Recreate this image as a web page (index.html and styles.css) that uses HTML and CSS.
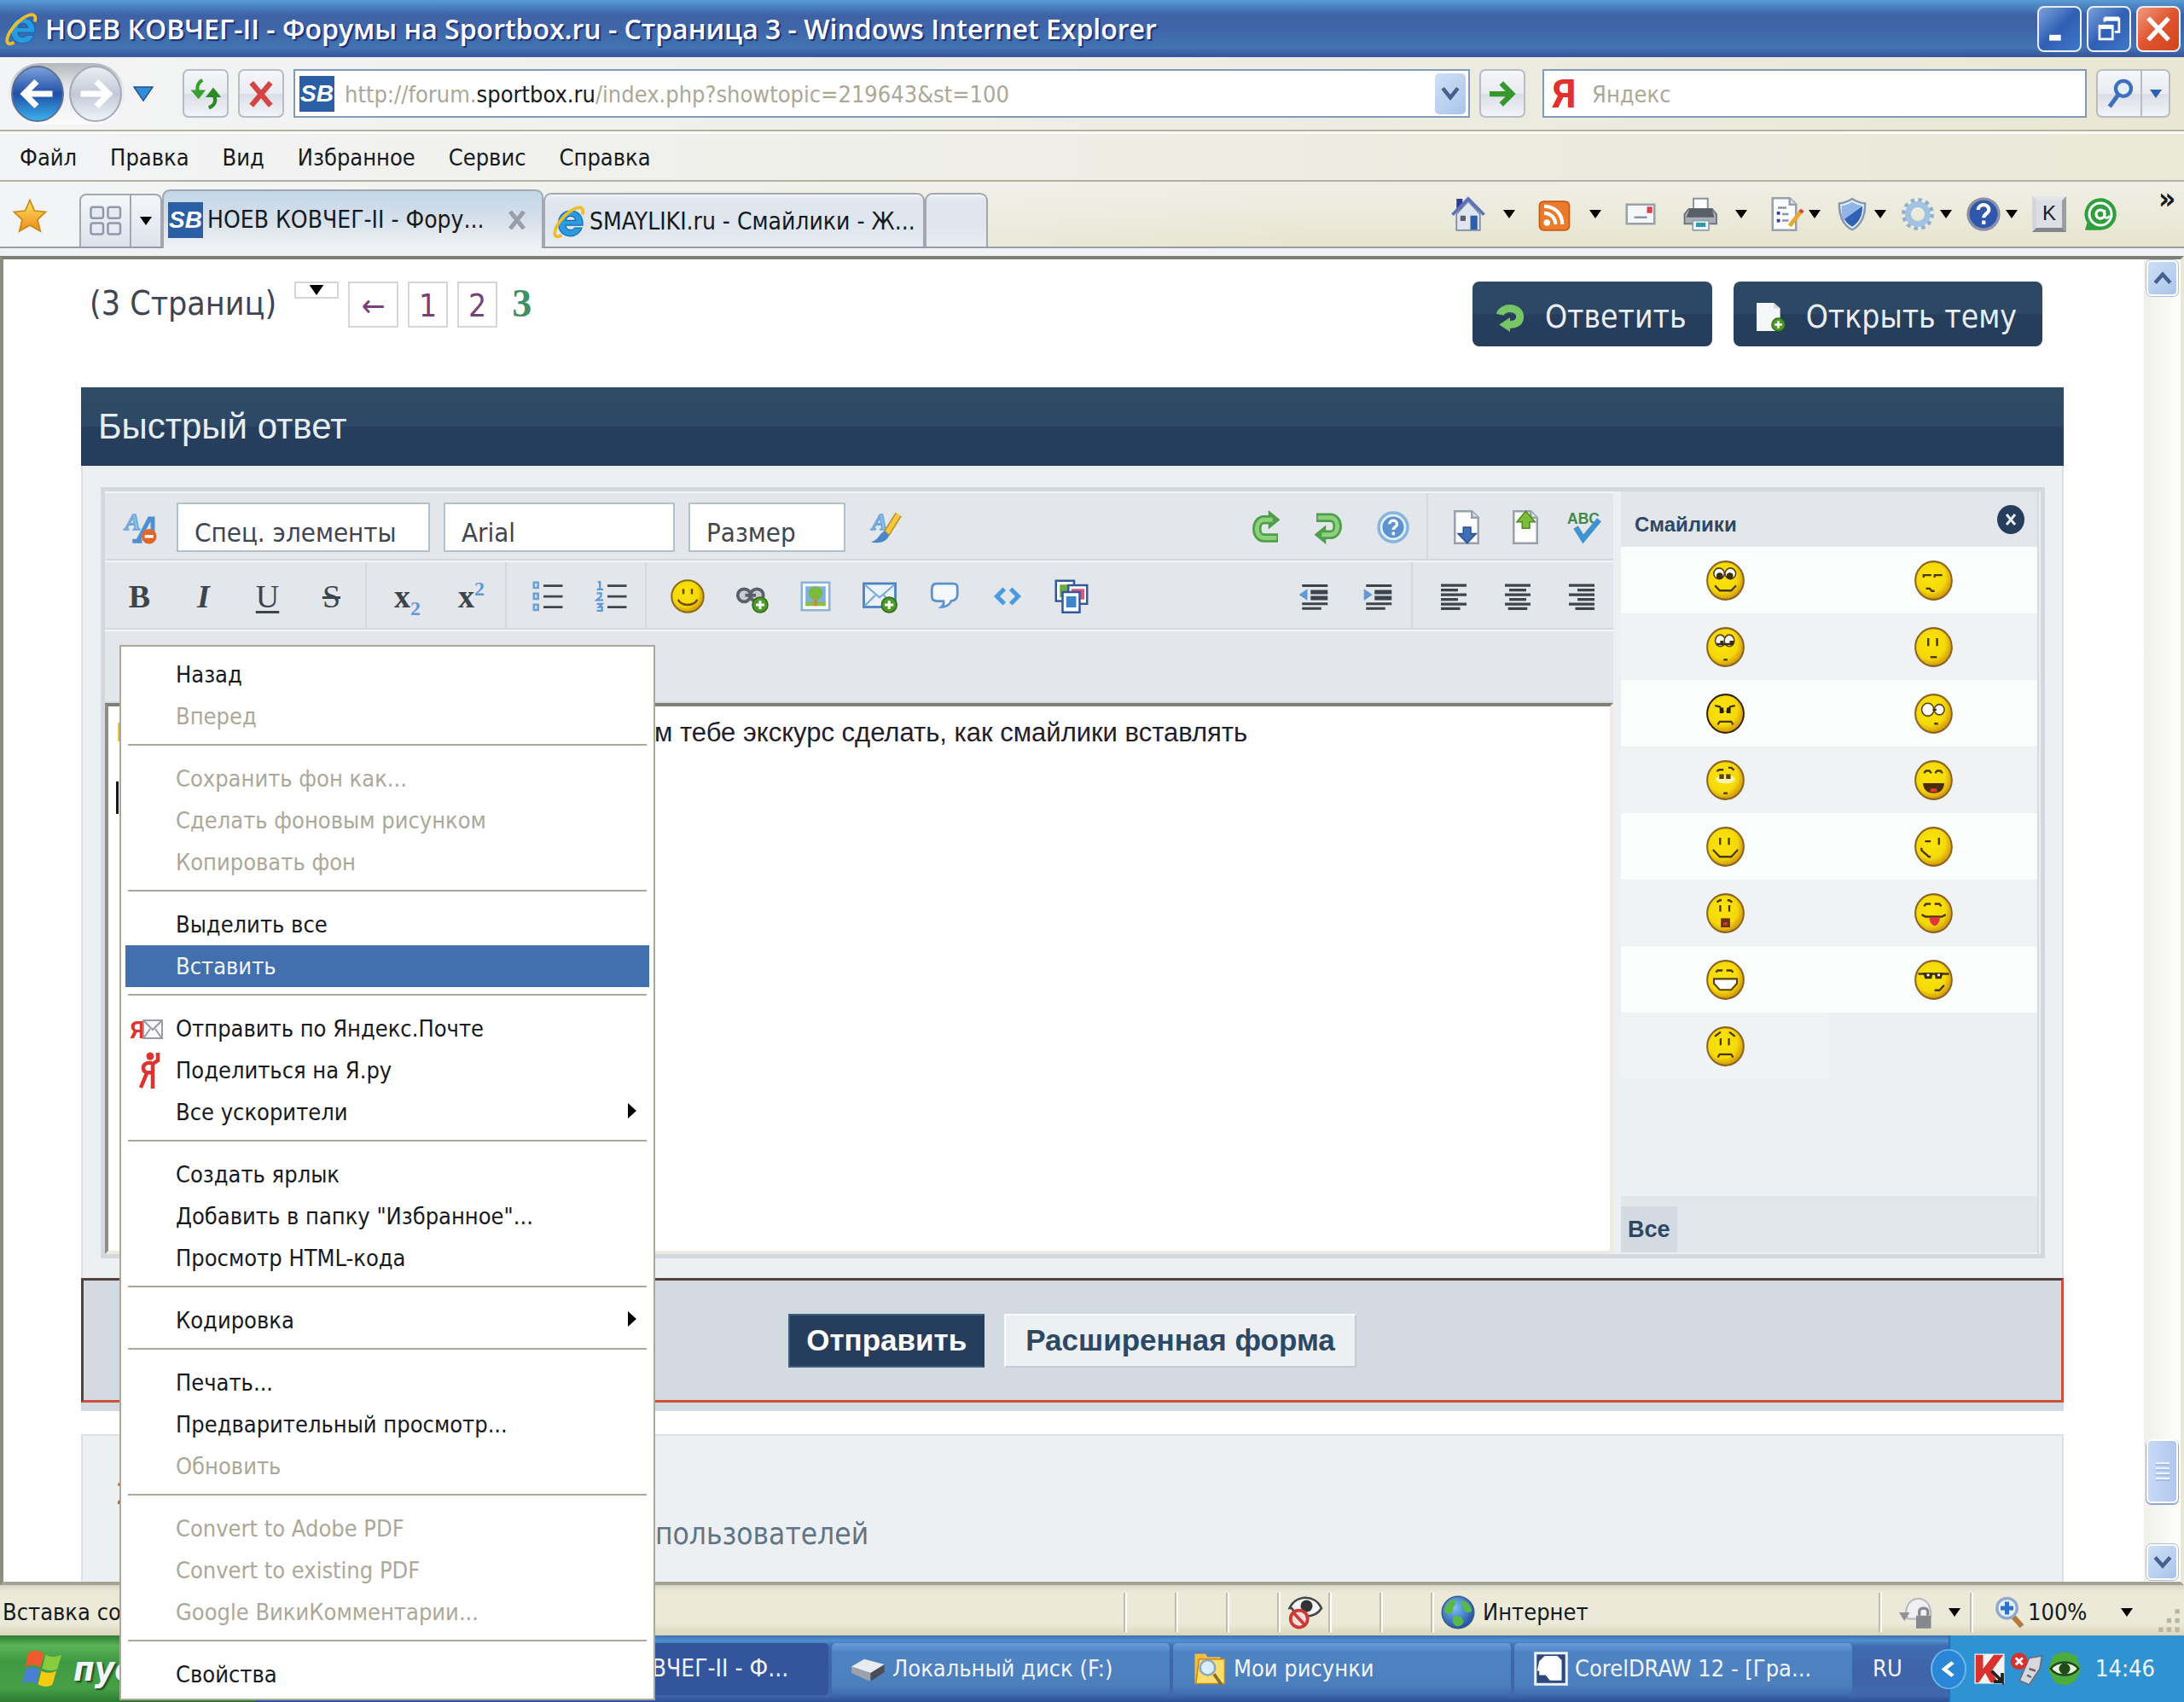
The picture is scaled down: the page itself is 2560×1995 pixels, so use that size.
FILE: index.html
```html
<!DOCTYPE html>
<html lang="ru">
<head>
    <meta charset="UTF-8">
    <meta name="viewport" content="width=device-width, initial-scale=1.0">
    <title>НОЕВ КОВЧЕГ-II - Форумы на Sportbox.ru - Страница 3</title>
    <link rel="stylesheet" href="styles.css">
</head>
<body>
    <!-- Общие значки -->
    <svg class="defs" aria-hidden="true">
        <defs>
            <linearGradient id="g-blue" x1="0" y1="0" x2="0" y2="1"><stop offset="0" stop-color="#7fa3dc"/><stop offset=".5" stop-color="#1f4fa5"/><stop offset="1" stop-color="#3cb4f0"/></linearGradient>
            <linearGradient id="g-grey" x1="0" y1="0" x2="0" y2="1"><stop offset="0" stop-color="#eceff4"/><stop offset=".5" stop-color="#c3cad6"/><stop offset="1" stop-color="#eef4fa"/></linearGradient>
            <linearGradient id="g-gold" x1="0" y1="0" x2="0" y2="1"><stop offset="0" stop-color="#ffe45c"/><stop offset="1" stop-color="#f08a1c"/></linearGradient>
            <radialGradient id="g-face" cx=".42" cy=".4" r=".62"><stop offset="0" stop-color="#fbe40a"/><stop offset=".65" stop-color="#f5d90a"/><stop offset="1" stop-color="#cf930e"/></radialGradient>
            <radialGradient id="g-globe" cx=".4" cy=".35" r=".7"><stop offset="0" stop-color="#7cc0f5"/><stop offset="1" stop-color="#1c4c9e"/></radialGradient>
        </defs>
        <symbol id="ie" viewBox="0 0 16 16">
            <path d="M14 9.600H6c.1 1.300 1 2.200 2.300 2.200.9 0 1.600-.4 2-1h3.300c-.7 2.300-2.700 3.900-5.300 3.900-3.500 0-5.700-2.400-5.700-5.900 0-3.500 2.400-6 5.900-6s5.800 2.700 5.500 6.800zM6.100 7.300h4.500C10.500 6.100 9.700 5.300 8.400 5.300S6.300 6.100 6.100 7.300z" fill="#2b9be0" stroke="#1668b4" stroke-width=".5"/>
            <path d="M13.900 4.600C14.700 2 13.700.7 11.200 1.500 7 2.800 1.800 8.500 1 12.500c-.5 2.500 1 3 3.200 1.800" fill="none" stroke="#f0bd2a" stroke-width="1.500"/>
        </symbol>
        <symbol id="plus" viewBox="0 0 8 8"><circle cx="4" cy="4" r="3.600" fill="#4c9a2a" stroke="#2f6b16" stroke-width=".6"/><path d="M4 2v4M2 4h4" stroke="#fff" stroke-width="1.200"/></symbol>
        <symbol id="down" viewBox="0 0 14 10"><path d="M0 0h14L7 10z"/></symbol>
        <symbol id="page" viewBox="0 0 16 16"><path d="M2.500.5h8l3 3v12h-11z" fill="#fcfcfd" stroke="#98a0ac"/><path d="M10.500.5v3h3" fill="#dfe3ea" stroke="#98a0ac"/></symbol>
    </svg>

    <header class="titlebar">
        <svg class="icon"><use href="#ie"/></svg>
        <h1>НОЕВ КОВЧЕГ-II - Форумы на Sportbox.ru - Страница 3 - Windows Internet Explorer</h1>
        <div class="window-buttons">
            <button type="button" aria-label="Свернуть"><svg viewBox="0 0 20 20"><path d="M3 16h8" stroke="#fff" stroke-width="4"/></svg></button>
            <button type="button" aria-label="Свернуть в окно"><svg viewBox="0 0 20 20"><path d="M7 5V3h10v9h-3" fill="none" stroke="#fff" stroke-width="1.600"/><path d="M7 3h10" stroke="#fff" stroke-width="3"/><path d="M3.500 8h9v9h-9z" fill="none" stroke="#fff" stroke-width="1.600"/><path d="M3 8.500h10" stroke="#fff" stroke-width="3"/></svg></button>
            <button type="button" class="close" aria-label="Закрыть"><svg viewBox="0 0 20 20"><path d="M3 2.500l14 15M17 2.500l-14 15" stroke="#fff" stroke-width="3.200"/></svg></button>
        </div>
    </header>

    <div class="addressbar">
        <div class="history">
            <button type="button" aria-label="Назад"><svg viewBox="0 0 60 64"><ellipse cx="30" cy="32" rx="29" ry="31" fill="url(#g-blue)" stroke="#5c6f96" stroke-width="2"/><path d="M47 32H16M29 18L15 32l14 14" fill="none" stroke="#fff" stroke-width="7"/></svg></button>
            <button type="button" aria-label="Вперед"><svg viewBox="0 0 60 64"><ellipse cx="30" cy="32" rx="29" ry="31" fill="url(#g-grey)" stroke="#a3abb8" stroke-width="2"/><path d="M13 32h31M31 18l14 14-14 14" fill="none" stroke="#fff" stroke-width="7"/></svg></button>
        </div>
        <button type="button" class="history-list" aria-label="Последние страницы"><svg viewBox="0 0 24 18"><path d="M1 1h22L12 17z" fill="#2f8ed8" stroke="#24508c" stroke-width="1.500"/></svg></button>
        <button type="button" class="tool" aria-label="Обновить"><svg class="icon" viewBox="0 0 16 16"><path d="M6.500 1.500C4 3 3.800 5.500 4.500 7.500" fill="none" stroke="#38a02c" stroke-width="1.700"/><path d="M1 6.200h7l-3.300 4.300z" fill="#38a02c"/><path d="M9.500 14.500c3-1 3.500-3.500 2.500-5.500" fill="none" stroke="#2b8a24" stroke-width="1.700"/><path d="M8 9.600h7.300l-3.700-4.600z" fill="#2b8a24"/></svg></button>
        <button type="button" class="tool" aria-label="Остановить"><svg class="icon" viewBox="0 0 16 16"><path d="M3.500 2.800l9 10.700M12.500 2.800l-9 10.700" stroke="#d34545" stroke-width="2.500"/></svg></button>
        <div class="field address">
            <span class="favicon">SB</span>
            <div class="url" role="textbox" contenteditable="true" aria-label="Адрес">http://forum.<b>sportbox.ru</b>/index.php?showtopic=219643&amp;st=100</div>
            <button type="button" class="address-drop" aria-label="Список адресов"><svg viewBox="0 0 20 16"><path d="M2 2l8 10 8-10" fill="none" stroke="#46608c" stroke-width="4"/></svg></button>
        </div>
        <button type="button" class="tool go" aria-label="Переход"><svg class="icon" viewBox="0 0 16 16"><path d="M2 8h10M7.500 3l5 5-5 5" fill="none" stroke="#36982c" stroke-width="2.500"/></svg></button>
        <div class="field search">
            <span class="yandex">Я</span>
            <input type="text" placeholder="Яндекс" aria-label="Яндекс">
        </div>
        <div class="search-buttons">
            <button type="button" class="tool" aria-label="Поиск"><svg class="icon" viewBox="0 0 16 16"><circle cx="10" cy="5.500" r="3.600" fill="#e6effa" stroke="#3c6fc0" stroke-width="1.700"/><path d="M7.500 8.500L3.500 14" stroke="#3c6fc0" stroke-width="2"/></svg></button>
            <button type="button" class="tool" aria-label="Выбор поиска"><svg class="arrow arrow-blue"><use href="#down"/></svg></button>
        </div>
    </div>

    <nav class="menubar">
        <button type="button">Файл</button>
        <button type="button">Правка</button>
        <button type="button">Вид</button>
        <button type="button">Избранное</button>
        <button type="button">Сервис</button>
        <button type="button">Справка</button>
    </nav>

    <div class="tabbar">
        <button type="button" class="star" aria-label="Избранное"><svg class="icon" viewBox="0 0 16 16"><path d="M8 .7l2.200 4.900 5.200.6-3.800 3.600 1.300 5.400L8 12.400l-4.900 2.800 1.300-5.400L.6 6.200l5.200-.6z" fill="url(#g-gold)" stroke="#c98a1a" stroke-width=".7"/></svg></button>
        <div class="quick-tabs">
            <button type="button" aria-label="Быстрые вкладки"><svg class="icon" viewBox="0 0 16 16"><g fill="#e6eaf2" stroke="#8f98ac"><rect x="1" y="1.500" width="5.800" height="5.200" rx="1"/><rect x="9" y="1.500" width="5.800" height="5.200" rx="1"/><rect x="1" y="9" width="5.800" height="5.200" rx="1"/><rect x="9" y="9" width="5.800" height="5.200" rx="1"/></g></svg></button>
            <button type="button" aria-label="Список вкладок"><svg class="arrow"><use href="#down"/></svg></button>
        </div>
        <div class="tab active">
            <span class="favicon">SB</span>
            <span>НОЕВ КОВЧЕГ-II - Фору...</span>
            <button type="button" class="tab-close" aria-label="Закрыть вкладку"><svg viewBox="0 0 20 22"><path d="M2 1l16 20M18 1L2 21" stroke="#9a9ea6" stroke-width="5"/></svg></button>
        </div>
        <div class="tab">
            <svg class="icon"><use href="#ie"/></svg>
            <span>SMAYLIKI.ru - Смайлики - Ж...</span>
        </div>
        <button type="button" class="tab new-tab" aria-label="Новая вкладка"></button>

        <div class="commands">
            <button type="button" class="cmd wide" aria-label="Домой">
                <svg class="icon" viewBox="0 0 16 16"><path d="M2.500 8v7.500h11V8L8 2z" fill="#e0e6ef" stroke="#7f8aa0" stroke-width=".7"/><path d="M2.500.8h2.800v4L2.500 7z" fill="#2c3a9c"/><path d="M.6 8.300L8 .8l7.400 7.500" fill="none" stroke="#5f70bf" stroke-width="1.500"/><path d="M4.300 8.700h2.500v2.500H4.300z" fill="#5a6070"/><path d="M9 8.700h3.300v6.500H9z" fill="#2f5fa8"/></svg>
                <svg class="arrow"><use href="#down"/></svg>
            </button>
            <button type="button" class="cmd wide" aria-label="Веб-каналы">
                <svg class="icon" viewBox="0 0 16 16"><rect x="1" y="2" width="14" height="13.500" rx="2" fill="#ec7a2b" stroke="#c95a14" stroke-width=".7"/><circle cx="4.500" cy="12" r="1.500" fill="#fff"/><path d="M3.200 7.500c3 0 5.300 2.200 5.300 5.300M3.200 4.300c5 0 8.500 3.500 8.500 8.500" fill="none" stroke="#fff" stroke-width="1.700"/></svg>
                <svg class="arrow"><use href="#down"/></svg>
            </button>
            <button type="button" class="cmd mail" aria-label="Почта">
                <svg class="icon" viewBox="0 0 16 16"><rect x="1.500" y="3.500" width="13" height="9" fill="#f6f7f9" stroke="#9aa0ac"/><rect x="11" y="4.500" width="2.500" height="3" fill="#d9434e"/><path d="M5 9.500h6" stroke="#8f94a0"/></svg>
            </button>
            <button type="button" class="cmd wide" aria-label="Печать">
                <svg class="icon" viewBox="0 0 16 16"><path d="M4.800.7h6.700V7H4.800z" fill="#fff" stroke="#8d929c" stroke-width=".8"/><path d="M.6 8l2-2.500h11l2 2.500v4.500H.6z" fill="#a9adb4" stroke="#6a6e78" stroke-width=".7"/><path d="M3 5.500h10.500L14.500 9.500h-13z" fill="#5a5e68"/><path d="M4.500 11h7.500v4.500H4.500z" fill="#f2f6fa" stroke="#8fa0b0" stroke-width=".7"/><path d="M6 12h4.500v2H6z" fill="#2f9aa8"/></svg>
                <svg class="arrow"><use href="#down"/></svg>
            </button>
            <button type="button" class="cmd" aria-label="Страница">
                <svg class="icon" viewBox="0 0 16 16"><use href="#page" x="-1"/><path d="M4 5h4M6 8h3M6 11h3" stroke="#8b93a6"/><path d="M3.500 7.500h1.500M3.500 11h1.500" stroke="#2b3f9c" stroke-width="1.500"/><path d="M15 6.500L9.500 13.500" stroke="#e9a92f" stroke-width="2"/><path d="M15.500 6l-1 1.200" stroke="#d04b42" stroke-width="2"/></svg>
                <svg class="arrow"><use href="#down"/></svg>
            </button>
            <button type="button" class="cmd" aria-label="Безопасность">
                <svg class="icon" viewBox="0 0 16 16"><path d="M8 .8c2 1.400 4 2 6 2.200.3 5-1.500 10-6 12.300C3.500 13 1.700 8 2 3c2-.2 4-.8 6-2.200z" fill="#eef3fa" stroke="#8796b2"/><path d="M8 2.200c1.500 1 3 1.500 4.700 1.800L4 11C3 8.800 2.800 6.400 3.200 4 5 3.700 6.500 3.200 8 2.200z" fill="#8fb6e6"/><path d="M12.800 4.200c.2 4-1.400 7.800-4.800 9.700-1.500-.8-2.800-2-3.600-3.500z" fill="#2f62b4"/></svg>
                <svg class="arrow"><use href="#down"/></svg>
            </button>
            <button type="button" class="cmd" aria-label="Сервис">
                <svg class="icon" viewBox="0 0 16 16"><circle cx="8" cy="8" r="6.500" fill="none" stroke="#8fb0d0" stroke-width="2.200" stroke-dasharray="1.700 1.700"/><circle cx="8" cy="8" r="4.600" fill="none" stroke="#a1c2e0" stroke-width="2.800"/></svg>
                <svg class="arrow"><use href="#down"/></svg>
            </button>
            <button type="button" class="cmd" aria-label="Справка">
                <svg class="icon" viewBox="0 0 16 16"><circle cx="8" cy="8" r="7.200" fill="#2f56ad" stroke="#8a90a4" stroke-width="1.300"/><path d="M5.500 6C5.600 2.800 10.600 3 10.500 6c0 1.700-2.400 1.800-2.400 3.700M8.100 11v1.800" fill="none" stroke="#fff" stroke-width="1.700"/></svg>
                <svg class="arrow"><use href="#down"/></svg>
            </button>
            <button type="button" class="cmd plain" aria-label="Клавиатура"><span class="key">K</span></button>
            <button type="button" class="cmd plain" aria-label="Агент">
                <svg class="icon" viewBox="0 0 16 16"><path d="M8 .5a7.500 7.500 0 110 15H.8l1-3.500A7.500 7.500 0 018 .5z" fill="#2f9e3c"/><circle cx="8" cy="8" r="5.200" fill="none" stroke="#fff" stroke-width="1.200"/><circle cx="8" cy="8" r="2" fill="none" stroke="#fff" stroke-width="1.300"/><path d="M10 6v3c.3 1.300 1.800 1 2-.3" fill="none" stroke="#fff"/></svg>
            </button>
            <span class="more">»</span>
        </div>
    </div>

    <div class="viewport">
        <main class="page">
            <div class="topic-nav">
                <div class="pages">
                    <span class="pages-label">(3 Страниц)</span>
                    <button type="button" class="pages-jump" aria-label="Перейти к странице"><svg viewBox="0 0 14 10"><use href="#down"/></svg></button>
                    <a href="#" class="page-link prev">←</a>
                    <a href="#" class="page-link">1</a>
                    <a href="#" class="page-link">2</a>
                    <span class="page-current">3</span>
                </div>
                <div class="topic-buttons">
                    <a href="#" class="topic-button"><svg viewBox="0 0 16 16"><path d="M2.500 6.500C3.500 2 13 1.500 13.500 7.500c0 3-2 4.500-5.500 4.500" fill="none" stroke="#76c566" stroke-width="4.200"/><path d="M8 8v8l-6-4z" fill="#76c566"/></svg>Ответить</a>
                    <a href="#" class="topic-button"><svg viewBox="0 0 16 16"><path d="M0 0h9.500L13 3v12.500H0z" fill="#f4f6f8"/><path d="M9.500 0v3H13z" fill="#cfd6de"/><use href="#plus" x="8" y="8" width="8" height="8"/></svg>Открыть тему</a>
                </div>
            </div>

            <section class="reply">
                <h2>Быстрый ответ</h2>
                <div class="reply-body">
                    <div class="editor">
                        <div class="editor-main">
                            <div class="toolbar">
                                <button type="button" class="tb" aria-label="Убрать форматирование"><svg class="icon" viewBox="0 0 16 16"><path d="M4.500 14.500h4.500M7 14.500L12.500 4h1.500v7" fill="none" stroke="#4f8fd0" stroke-width="2"/><text x="1" y="9" class="ico-a">A</text><circle cx="12.300" cy="12.300" r="3.500" fill="#e0672a"/><path d="M10.300 12.300h4" stroke="#fff" stroke-width="1.400"/></svg></button>
                                <select class="sel-special" aria-label="Спец. элементы"><option>Спец. элементы</option></select>
                                <select class="sel-font" aria-label="Шрифт"><option>Arial</option></select>
                                <select class="sel-size" aria-label="Размер"><option>Размер</option></select>
                                <button type="button" class="tb" aria-label="Цвет шрифта"><svg class="icon" viewBox="0 0 16 16"><text x="2" y="9" class="ico-a">A</text><path d="M14.500 2L8.500 11.500" stroke="#b98a1a" stroke-width="3.400"/><path d="M14.500 2L8.500 11.500" stroke="#f4c83c" stroke-width="2.200"/><path d="M8.500 10c-3 0-2.500 3.500-7 5 3.500.8 8 0 8.500-3.500z" fill="#4a86c8"/></svg></button>
                                <div class="tb-group right">
                                    <button type="button" class="tb" aria-label="Вперед"><svg class="icon" viewBox="0 0 16 16"><path d="M11 4.500H7.500C3 4.500 3 13 7.500 13H14" fill="none" stroke="#4e9f4c" stroke-width="4.200"/><path d="M9.500 0l5.500 4.500L9.500 9z" fill="#4e9f4c"/><path d="M11.500 4.500h-4C3 4.500 3 13 7.500 13H13.300" fill="none" stroke="#8fd07c" stroke-width="2"/></svg></button>
                                    <button type="button" class="tb" aria-label="Назад"><svg class="icon" viewBox="0 0 16 16"><path d="M2 3.500h6.500c4.500 0 4.500 8 0 8H5" fill="none" stroke="#4e9f4c" stroke-width="4.200"/><path d="M6.500 7L1 11.500 6.500 16z" fill="#4e9f4c"/><path d="M2.700 3.500h5.800c4.500 0 4.500 8 0 8H4.500" fill="none" stroke="#8fd07c" stroke-width="2"/></svg></button>
                                    <button type="button" class="tb" aria-label="Помощь"><svg class="icon" viewBox="0 0 16 16"><circle cx="8" cy="8" r="6.800" fill="#e2eefa" stroke="#88b4e0" stroke-width="1.400"/><circle cx="8" cy="8" r="5" fill="#5d93cf"/><path d="M6.300 6.500c0-2.200 3.500-2.200 3.500 0 0 1.300-1.700 1.400-1.700 2.700M8.100 10.200v1.500" fill="none" stroke="#fff" stroke-width="1.300"/></svg></button>
                                </div>
                                <div class="tb-group last narrow">
                                    <button type="button" class="tb" aria-label="Уменьшить"><svg class="icon" viewBox="0 0 16 16"><use href="#page"/><path d="M6.500 8h3.500v3h2.500l-4.200 4.500L4 11h2.500z" fill="#3f6fb8" stroke="#28508e" stroke-width=".6"/></svg></button>
                                    <button type="button" class="tb" aria-label="Увеличить"><svg class="icon" viewBox="0 0 16 16"><use href="#page"/><path d="M6.500 8.500h3.500v-3h2.500L8.200.5 4 5.500h2.500z" fill="#7dbf38" stroke="#4c8c22" stroke-width=".6"/></svg></button>
                                    <button type="button" class="tb" aria-label="Проверка орфографии"><svg class="icon" viewBox="0 0 16 16"><text x="0" y="6.500" class="ico-abc">ABC</text><path d="M4 8l3.500 5.500L15 4.500" fill="none" stroke="#3f93d2" stroke-width="2.600"/></svg></button>
                                </div>
                            </div>
                            <div class="toolbar">
                                <div class="tb-group first">
                                    <button type="button" class="tb"><b>B</b></button>
                                    <button type="button" class="tb"><i>I</i></button>
                                    <button type="button" class="tb"><u>U</u></button>
                                    <button type="button" class="tb"><s>S</s></button>
                                </div>
                                <div class="tb-group">
                                    <button type="button" class="tb"><b>x<sub>2</sub></b></button>
                                    <button type="button" class="tb"><b>x<sup>2</sup></b></button>
                                </div>
                                <div class="tb-group">
                                    <button type="button" class="tb" aria-label="Список"><svg class="icon" viewBox="0 0 16 16"><path d="M6 3h9M6 8h9M6 13h9" stroke="#3d444c" stroke-width="1.100"/><g fill="#cfe2f4" stroke="#6ba1d8"><rect x="1.500" y="1.500" width="2" height="2.500"/><rect x="1.500" y="6.700" width="2" height="2.500"/><rect x="1.500" y="11.900" width="2" height="2.500"/></g></svg></button>
                                    <button type="button" class="tb" aria-label="Нумерованный список"><svg class="icon" viewBox="0 0 16 16"><path d="M6 3h9M6 8h9M6 13h9" stroke="#3d444c" stroke-width="1.100"/><path d="M1.500 1.200h1v3.500M1 4.700h3M1 6.500h2v1.500l-2 1.700h3M1 11.500h2.500L2 13h1.500v1.700H1" fill="none" stroke="#5f9ad6" stroke-width=".9"/></svg></button>
                                </div>
                                <div class="tb-group open">
                                    <button type="button" class="tb" aria-label="Смайлик"><svg class="icon" viewBox="0 0 16 16"><circle cx="8" cy="8" r="7.500" fill="url(#g-face)" stroke="#8a6a10" stroke-width=".8"/><path d="M6 4.500V7M10 4.500V7M3.500 9.500c1.500 3.300 7.500 3.300 9 0" fill="none" stroke="#6b4a08" stroke-width="1"/></svg></button>
                                    <button type="button" class="tb" aria-label="Ссылка"><svg class="icon" viewBox="0 0 16 16"><g fill="#c9cdd2" stroke="#5a6068" stroke-width="1.500"><rect x="1.500" y="4.500" width="6" height="6" rx="3"/><rect x="7.500" y="4.500" width="6" height="6" rx="3"/><path d="M5 7.500h5"/></g><use href="#plus" x="8" y="8" width="8" height="8"/></svg></button>
                                    <button type="button" class="tb" aria-label="Картинка"><svg class="icon" viewBox="0 0 16 16"><rect x="1.500" y="1.500" width="13" height="13" fill="#f4f8fc" stroke="#8db2da"/><rect x="3.300" y="3.300" width="9.400" height="9" fill="#7fb0e0"/><path d="M3.300 10.500h9.400v2H3.300z" fill="#8bbf48"/><path d="M8 8v4.500" stroke="#c88a38" stroke-width="1.500"/><circle cx="8" cy="6.500" r="3.200" fill="#7cba3c"/></svg></button>
                                    <button type="button" class="tb" aria-label="Письмо"><svg class="icon" viewBox="0 0 16 16"><rect x=".6" y="2" width="14.800" height="11" fill="#eaf3fc" stroke="#4a80c0" stroke-width="1.100"/><path d="M1 2.500l7 6 7-6M1 12.500l5-5M15 12.500l-5-5" fill="none" stroke="#7fa8d8" stroke-width=".9"/><use href="#plus" x="8.500" y="8" width="8" height="8"/></svg></button>
                                    <button type="button" class="tb" aria-label="Цитата"><svg class="icon" viewBox="0 0 16 16"><path d="M4.500 2h8c2 0 2 1 2 3v2c0 2-1 3-3 3.200C11 12 9 13 7 13c1-.8 1.200-1.700 1-2.800H5C2.500 10 2.500 9 2.500 7V5c0-2 .5-3 2-3z" fill="#f2f8fe" stroke="#5c92cc" stroke-width="1.100"/></svg></button>
                                    <button type="button" class="tb" aria-label="Код"><svg class="icon" viewBox="0 0 16 16"><path d="M6.500 4.500L3 8l3.500 3.500M9.500 4.500L13 8l-3.500 3.500" fill="none" stroke="#4a9ae0" stroke-width="2"/></svg></button>
                                    <button type="button" class="tb" aria-label="Медиа"><svg class="icon" viewBox="0 0 16 16"><g stroke="#34589c" stroke-width="1"><path d="M.7.7h8.500v9.500H.7z" fill="#fff"/><path d="M2.500 2.500h5v6h-5z" fill="#6aa84a" stroke="none"/><path d="M6.500 2.800h8.800v8.700H6.500z" fill="#fff"/><path d="M8 4.500h6v5H8z" fill="#d8577a" stroke="none"/><path d="M3.800 6h8v9.500h-8z" fill="#fff"/><path d="M5.500 8h4.700v5.200H5.500z" fill="#3f86c8" stroke="none"/></g></svg></button>
                                </div>
                                <div class="tb-group right">
                                    <button type="button" class="tb" aria-label="Уменьшить отступ"><svg class="icon" viewBox="0 0 16 16"><path d="M2.500 3h12M2.500 11.500h12M2.500 13.700h9" stroke="#3d444c" stroke-width="1.200"/><path d="M6.500 6h8M6.500 8.800h8" stroke="#3d444c" stroke-width="2"/><path d="M5 4.500v5.500L1 7.200z" fill="#5f9ad6"/></svg></button>
                                    <button type="button" class="tb" aria-label="Увеличить отступ"><svg class="icon" viewBox="0 0 16 16"><path d="M2.500 3h12M2.500 11.500h12M2.500 13.700h9" stroke="#3d444c" stroke-width="1.200"/><path d="M6.500 6h8M6.500 8.800h8" stroke="#3d444c" stroke-width="2"/><path d="M1.500 4.500v5.500l4-2.800z" fill="#5f9ad6"/></svg></button>
                                </div>
                                <div class="tb-group last">
                                    <button type="button" class="tb" aria-label="По левому краю"><svg class="icon" viewBox="0 0 16 16"><path d="M2 2.800h12M2 5h8M2 7.200h12M2 9.400h8M2 11.600h12M2 13.700h9" stroke="#3d444c" stroke-width="1.300"/></svg></button>
                                    <button type="button" class="tb" aria-label="По центру"><svg class="icon" viewBox="0 0 16 16"><path d="M2 2.800h12M4 5h8M2 7.200h12M4 9.400h8M2 11.600h12M3.500 13.700h9" stroke="#3d444c" stroke-width="1.300"/></svg></button>
                                    <button type="button" class="tb" aria-label="По правому краю"><svg class="icon" viewBox="0 0 16 16"><path d="M2 2.800h12M6 5h8M2 7.200h12M6 9.400h8M2 11.600h12M5 13.700h9" stroke="#3d444c" stroke-width="1.300"/></svg></button>
                                </div>
                            </div>
                            <div class="toolbar empty"></div>
                            <div class="editor-text" role="textbox" contenteditable="true" aria-label="Сообщение"><p><span class="quoted">Н</span>м тебе экскурс сделать, как смайлики вставлять</p><p class="caret"></p></div>
                        </div>
                        <aside class="smileys">
                            <div class="smileys-head">
                                <h3>Смайлики</h3>
                                <button type="button" aria-label="Закрыть"><svg viewBox="0 0 32 34"><ellipse cx="16" cy="17" rx="16" ry="17" fill="#263d5c"/><path d="M11 11l10 12M21 11L11 23" stroke="#e8edf2" stroke-width="3"/></svg></button>
                            </div>
                            <div class="smileys-grid" id="smileys"></div>
                            <div class="smileys-foot"><a href="#">Все</a></div>
                        </aside>
                    </div>
                </div>
                <div class="submit-row">
                    <button type="submit" class="submit">Отправить</button>
                    <button type="button" class="submit extended">Расширенная форма</button>
                </div>
            </section>

            <section class="stats">
                <p class="stats-count">2</p>
                <p class="stats-line">пользователей</p>
            </section>
        </main>
        <div class="scrollbar">
            <button type="button" class="sb-button" aria-label="Вверх"><svg viewBox="0 0 20 16"><path d="M2 13l8-9 8 9" fill="none" stroke="#46608c" stroke-width="4"/></svg></button>
            <div class="sb-thumb"><svg viewBox="0 0 16 22"><path d="M0 1h16M0 7h16M0 13h16M0 19h16" stroke="#eef4fe" stroke-width="2"/><path d="M0 3h16M0 9h16M0 15h16M0 21h16" stroke="#8ba8d8" stroke-width="1"/></svg></div>
            <button type="button" class="sb-button" aria-label="Вниз"><svg viewBox="0 0 20 16"><path d="M2 3l8 9 8-9" fill="none" stroke="#46608c" stroke-width="4"/></svg></button>
        </div>
    </div>

    <footer class="statusbar">
        <span class="status-text">Вставка со</span>
        <span class="cell"></span>
        <span class="cell"></span>
        <span class="cell"></span>
        <span class="cell"><svg class="icon" viewBox="0 0 16 16"><path d="M1 6c3-6.500 12-6.500 15 0-3 5-11 5-14 0z" fill="#f4f4f4" stroke="#444" stroke-width="1"/><circle cx="9" cy="5" r="2.800" fill="#333"/><circle cx="5.500" cy="11" r="4" fill="#f6dede" stroke="#cc3a36" stroke-width="1.500"/><path d="M3 8.300l5 5.400" stroke="#cc3a36" stroke-width="1.500"/></svg></span>
        <span class="cell"></span>
        <span class="cell"></span>
        <span class="cell zone">
            <svg class="icon" viewBox="0 0 16 16"><circle cx="8" cy="8" r="7.500" fill="url(#g-globe)" stroke="#3a5a8c" stroke-width=".6"/><path d="M3 4c2-2.500 4-2.500 4-1 0 2-1.500 2-1.500 4S3.500 9 2 8c-.5-1.500 0-3 1-4zM10 2.500c2 0 4 2 4.500 4.500-1 2-3.500 1-4-1s-2-2-.5-3.500zM6 10c2-1 5 .5 4.500 3-1 1.500-3 2-4 1S5 11 6 10z" fill="#58b848"/></svg>
            Интернет
        </span>
        <button type="button" class="cell lock" aria-label="Защищенный режим">
            <svg class="icon" viewBox="0 0 16 16"><path d="M4 11C2 6 5 1.500 9 1.500S16 6 14.500 11z" fill="#f0f0f2" stroke="#b6b8bc" stroke-width=".8"/><path d="M0 8h5l-2.500 4z" fill="#8f9298"/><rect x="8" y="9.500" width="7" height="6" fill="#85888e"/><path d="M9.500 9.500V7.500c0-2 4-2 4 0v2" fill="none" stroke="#85888e" stroke-width="1.300"/></svg>
            <svg class="arrow"><use href="#down"/></svg>
        </button>
        <button type="button" class="cell zoom">
            <svg class="icon" viewBox="0 0 16 16"><path d="M9.500 9.500l4.500 5" stroke="#b5793c" stroke-width="2.500"/><circle cx="7" cy="6" r="4.700" fill="#e4effa" stroke="#8fa9cc" stroke-width="1.300"/><path d="M7 3v6M4 6h6" stroke="#2f74c8" stroke-width="2"/></svg>
            100%
            <svg class="arrow"><use href="#down"/></svg>
        </button>
        <svg class="grip" viewBox="0 0 24 28"><g fill="#b8b5a2"><path d="M18 2h5v5h-5zM9 12h5v5H9zM18 12h5v5h-5zM0 22h5v5H0zM9 22h5v5H9zM18 22h5v5h-5z"/></g></svg>
    </footer>

    <div class="taskbar">
        <button type="button" class="start">
            <svg viewBox="0 0 48 48"><path d="M7 5C12 1 19 1 26 5l-4 17c-5-4-11-4-18-1z" fill="#ee5a2c"/><path d="M28 7c6 3 12 3 19 0l-5 17c-6 3-12 2-18-1z" fill="#86cc3e"/><path d="M4 24c6-3 12-3 17 1l-4 17c-5-4-11-4-17 0z" fill="#4b7fd4"/><path d="M23 26c6 3 12 3 18 0l-5 17c-6 3-11 2-17-1z" fill="#f6c912"/></svg>
            пуск
        </button>
        <div class="tasks">
            <button type="button" class="task current"><svg class="icon"><use href="#ie"/></svg>НОЕВ КОВЧЕГ-II - Ф...</button>
            <button type="button" class="task"><svg class="icon" viewBox="0 0 16 16"><path d="M0 7l6-3.500 9.500 2.500L9 10z" fill="#e9ebef"/><path d="M0 7l9 3v4L0 10z" fill="#9da1a9"/><path d="M9 10l6.500-4v3.500L9 14z" fill="#4a4e58"/></svg>Локальный диск (F:)</button>
            <button type="button" class="task"><svg class="icon" viewBox="0 0 16 16"><path d="M1 1h5l1 1.500h6V15H1z" fill="#f2bd3c"/><path d="M3 3.500h12V15H1.500z" fill="#fbdd6c" stroke="#c4861c" stroke-width=".6"/><circle cx="7" cy="7.500" r="3.500" fill="#d8eefa" stroke="#8ea6bc"/><path d="M10 10.500l3.500 5" stroke="#8a6a30" stroke-width="1.500"/></svg>Мои рисунки</button>
            <button type="button" class="task"><svg class="icon" viewBox="0 0 16 16"><path d="M.7.7h14.600v14.600H.7z" fill="#2e4a7c" stroke="#eef2f8" stroke-width="1.200"/><path d="M2.500 4.500L5 2h6l2 2v9.500H7.500L5.500 11H2.500V9H1.500z" fill="#fff"/></svg>CorelDRAW 12 - [Гра...</button>
        </div>
        <span class="lang">RU</span>
        <div class="tray">
            <button type="button" class="tray-toggle" aria-label="Показать скрытые значки"><svg viewBox="0 0 42 60" preserveAspectRatio="none"><ellipse cx="21" cy="30" rx="20" ry="29" fill="#2a86d6" stroke="#6cb6ee" stroke-width="2"/><path d="M26 20L16 30l10 10" fill="none" stroke="#fff" stroke-width="5"/></svg></button>
            <svg class="icon" viewBox="0 0 16 16"><path d="M1 1h14v14H1z" fill="#f4f4f4"/><path d="M1.500 1.500h3.500V8l5-6.500h4.500L9 9l3 5.500H8.500L6 10l-3 4.500H1.500z" fill="#d8322e"/><path d="M9 9l5 5v-4M14 14h-4" fill="none" stroke="#222" stroke-width="1.500"/></svg>
            <svg class="icon" viewBox="0 0 16 16"><path d="M9 3l6-1-1 6-5 7.500-4.500-2z" fill="#d6d8dd" stroke="#6a6e76" stroke-width=".7"/><path d="M9 8l3 1M8 11l2 1" stroke="#666"/><circle cx="4.300" cy="4.500" r="4" fill="#d8302c"/><path d="M2.700 2.900l3.200 3.200M5.900 2.900L2.700 6.100" stroke="#fff" stroke-width="1.200"/></svg>
            <svg class="icon" viewBox="0 0 16 16"><path d="M8 .3c4 0 6.500 2 6.500 5 1.500 2 1.200 4.500-.5 6-.8 3-3 4.400-6 4.400s-5.500-1.500-6-4.400c-1.700-1.500-2-4-.5-6C1.500 2.300 4 .3 8 .3z" fill="#4cab3c"/><path d="M1.500 8C4.500 4 11.500 4 14.500 8c-3 4-10 4-13 0z" fill="#e6f2dc" stroke="#1f4a1a"/><circle cx="8" cy="8" r="2.600" fill="#1f4a1a"/></svg>
            <span class="clock">14:46</span>
        </div>
    </div>

    <!-- Контекстное меню -->
    <ul class="context-menu">
        <li><button type="button">Назад</button></li>
        <li><button type="button" disabled>Вперед</button></li>
        <li class="sep"></li>
        <li><button type="button" disabled>Сохранить фон как...</button></li>
        <li><button type="button" disabled>Сделать фоновым рисунком</button></li>
        <li><button type="button" disabled>Копировать фон</button></li>
        <li class="sep"></li>
        <li><button type="button">Выделить все</button></li>
        <li><button type="button" class="selected">Вставить</button></li>
        <li class="sep"></li>
        <li><button type="button"><svg class="item-icon" viewBox="0 0 40 40"><text x="2" y="31" class="ico-ya">Я</text><path d="M17 10h22v21H17z" fill="#fafafa" stroke="#9a9ca2" stroke-width="2"/><path d="M18 11l10 10 10-10M18 30l7-10M38 30l-7-10" fill="none" stroke="#9a9ca2" stroke-width="2"/></svg>Отправить по Яндекс.Почте</button></li>
        <li><button type="button"><svg class="item-icon tall" viewBox="0 0 28 44"><circle cx="15" cy="5" r="4.500" fill="#dc3430"/><path d="M24 1v9l-6 4v29M17 13c-7-1-10 2-10 6s3 6 10 5M11 25L4 42" fill="none" stroke="#dc3430" stroke-width="4.500"/></svg>Поделиться на Я.ру</button></li>
        <li><button type="button">Все ускорители<svg class="submenu" viewBox="0 0 10 18"><path d="M0 0l10 9-10 9z"/></svg></button></li>
        <li class="sep"></li>
        <li><button type="button">Создать ярлык</button></li>
        <li><button type="button">Добавить в папку "Избранное"...</button></li>
        <li><button type="button">Просмотр HTML-кода</button></li>
        <li class="sep"></li>
        <li><button type="button">Кодировка<svg class="submenu" viewBox="0 0 10 18"><path d="M0 0l10 9-10 9z"/></svg></button></li>
        <li class="sep"></li>
        <li><button type="button">Печать...</button></li>
        <li><button type="button">Предварительный просмотр...</button></li>
        <li><button type="button" disabled>Обновить</button></li>
        <li class="sep"></li>
        <li><button type="button" disabled>Convert to Adobe PDF</button></li>
        <li><button type="button" disabled>Convert to existing PDF</button></li>
        <li><button type="button" disabled>Google ВикиКомментарии...</button></li>
        <li class="sep"></li>
        <li><button type="button">Свойства</button></li>
    </ul>

    <script>
        const line = (d, w) => `<path d="${d}" fill="none" stroke="#4a3606" stroke-width="${w || 1}"/>`;
        const fill = (d, c) => `<path d="${d}" fill="${c}"/>`;

        // Рисунок лица для каждого смайлика, сетка 20x20
        const faces = [
            ['smile', '<g fill="#fff" stroke="#5a4208" stroke-width=".7"><ellipse cx="6.700" cy="6.500" rx="2.800" ry="2.700"/><ellipse cx="12.600" cy="6.500" rx="2.800" ry="2.700"/></g><circle cx="7" cy="7.800" r="1.700" fill="#3a2c10"/><circle cx="12.300" cy="7.800" r="1.700" fill="#3a2c10"/>' + line('M4.500 12.500L7 15h6l2.500-2.500')],
            ['sleep', line('M4.800 8.500V7.300h4M10.500 8.500V7.300h4') + line('M6 14h2l1 1.200h1.500')],
            ['rolleyes', '<g fill="#fff" stroke="#5a4208" stroke-width=".7"><ellipse cx="7.300" cy="6.800" rx="2.600" ry="2.900"/><ellipse cx="12" cy="6.800" rx="2.600" ry="2.900"/></g>' + fill('M5.200 9h9V6.800h-2V8H9V6.800H7.300V8H5.500z', '#3a2c10') + line('M9 16.300h2')],
            ['mellow', line('M7.200 5.500v4M11.800 5.500v4', 1.1) + line('M8.300 15h3.400')],
            ['mad', '<circle cx="10" cy="10" r="9.500" fill="none" stroke="#2a1e08" stroke-width=".7"/>' + line('M4.500 6l2.500.5 2 2.700M15 6l-2.500.5-2 2.700') + fill('M7 7h2v2.800H7zM10.700 7h2v2.800h-2z', '#2a1e08') + line('M6 15.500L7 14h6l1 1.500')],
            ['huh', '<g fill="#fff" stroke="#5a4208" stroke-width=".7"><circle cx="7" cy="8" r="3.200"/><circle cx="13" cy="8" r="2.600"/></g>' + line('M9.500 8h2M10.300 15h2')],
            ['dry', line('M5.500 5.500L7 4.800h2M11.500 3.800h1.500l1.500 1.200') + '<ellipse cx="10" cy="9.500" rx="5" ry="2.200" fill="#fdf6a8"/>' + fill('M6.800 7h2.400v2.400H6.800zM10.300 7h2.400v2.400h-2.400z', '#5a4208') + line('M9 16.500h2')],
            ['laugh', line('M5 6.500L6 5.300h1.800l1 1.200M10.800 6.500l1-1.200h1.800l1 1.200') + fill('M4.500 11.500h11c0 3-2 5-5.500 5s-5.500-2-5.500-5z', '#4a2c0a') + fill('M8.500 14.200h3l.5 1.600H8z', '#e03a2c')],
            ['happy', line('M7.200 5.500v3.500M11.800 5.500v3.500') + line('M3.500 11.500L7 15h6l3.500-3.500')],
            ['wink', line('M5.500 7.300h3M12.800 5.500v3.500') + line('M3.700 10.500v1.300L7.500 15h1')],
            ['ohmy', line('M5.500 4.500L7 3.500h1M11 3.500h1l1.500 1M7.300 6v3.200M12 6v3.200') + fill('M7.600 12.500h4.800v4.500H7.600z', '#6a3010') + fill('M9 14.500h2v1.500H9z', '#d83a2c')],
            ['tongue', line('M5 6.500L6 5.300h2.500M10.500 5.300H13l1 1.200') + line('M3.800 10.700l2 1h8.500l2-1') + fill('M7.800 12h5.500c0 2.500-1.500 4-2.700 4.300-1.500-.4-2.800-2-2.800-4.300z', '#e23440')],
            ['biggrin', line('M5 6.200L6 5.300h2.500M10.500 5.300H13l1 .9') + '<path d="M4 9.500h12v2.300L13 15H7l-3-3.200z" fill="#fff" stroke="#5a4208" stroke-width=".9"/>'],
            ['cool', line('M2 7h16') + fill('M4.500 6.500h5l-.5 3H5.500zM10.500 6.500h4.500l-1 3h-3z', '#3a2c10') + fill('M6.500 7h1.300v1.200H6.500zM12 7h1.300v1.200H12z', '#fff') + line('M10.500 15.200h2.500l2.500-2.500')],
            ['sad', line('M4.500 5L7.500 2.800M12 2.800L15 5M7.500 6v3.500M11.800 6v3.500') + line('M6 15.500L7 14h6l1 1.500')]
        ];

        document.getElementById('smileys').innerHTML = faces.map(([name, face]) => `
            <button type="button" aria-label="${name}">
                <svg viewBox="0 0 20 20" preserveAspectRatio="none">
                    <circle cx="10" cy="10" r="9.500" fill="url(#g-face)" stroke="#8a6420" stroke-width=".9"/>${face}
                </svg>
            </button>`).join('');
    </script>
</body>
</html>
```

FILE: styles.css
```css
* {
    box-sizing: border-box;
}

body {
    position: relative;
    display: flex;
    flex-direction: column;
    height: 100vh;
    margin: 0;
    overflow: hidden;
    font-family: "DejaVu Sans Condensed", "DejaVu Sans", Tahoma, sans-serif;
    font-size: 27px;
    line-height: 34px;
    color: #16191e;
    background: #fff;
}

button {
    display: flex;
    align-items: center;
    justify-content: center;
    padding: 0;
    border: 0;
    background: none;
    color: inherit;
    font: inherit;
    flex: none;
}

h1, h2, h3, p {
    margin: 0;
    font-weight: normal;
}

svg {
    display: block;
    flex: none;
}

.defs {
    position: absolute;
    width: 0;
    height: 0;
}

.icon {
    width: 40px;
    height: 42px;
    overflow: visible;
}

.arrow {
    width: 14px;
    height: 10px;
}

.arrow-blue {
    fill: #2c62b4;
}

/* Заголовок окна */

.titlebar {
    display: flex;
    align-items: center;
    height: 67px;
    padding: 0 4px 0 6px;
    background: linear-gradient(#5b9bd5 0, #4f8bc8 5px, #3f62a5 18px, #3f66a8 34px, #4374b2 56px, #3a5a9f 64px, #3a5598);
    flex: none;
}

.titlebar h1 {
    flex: 1;
    margin-left: 7px;
    font-family: "Open Sans", sans-serif;
    font-size: 32px;
    line-height: 44px;
    font-weight: 600;
    color: #fff;
    text-shadow: 2px 2px 1px #1c2f78;
    white-space: nowrap;
}

.window-buttons {
    display: flex;
    gap: 6px;
}

.window-buttons button {
    width: 52px;
    height: 54px;
    border: 2px solid #e9effa;
    border-radius: 8px;
    background: linear-gradient(135deg, #7da0dc, #2f5fb4 50%, #3f78c8);
}

.window-buttons svg {
    width: 34px;
    height: 36px;
}

.window-buttons .close {
    background: linear-gradient(135deg, #f09a80, #e0532c 50%, #cf4620);
}

/* Адресная строка */

.addressbar {
    display: flex;
    align-items: center;
    height: 87px;
    padding: 0 16px 0 13px;
    border-bottom: 2px solid #b3b1a2;
    background: linear-gradient(90deg, #f3f4f6, #ecebdf 70%, #e9e7d3);
    flex: none;
}

.history {
    display: flex;
    gap: 6px;
    padding: 3px;
    margin: 0 10px 0 -3px;
    border-radius: 36px;
    background: linear-gradient(#b4b6bb, #e8eaee 40%, #fbfbfc);
}

.history svg {
    width: 62px;
    height: 66px;
}

.history-list {
    margin-right: 34px;
}

.history-list svg {
    width: 24px;
    height: 18px;
}

.tool {
    width: 54px;
    height: 57px;
    margin-right: 11px;
    border: 2px solid #b8bcc6;
    border-radius: 7px;
    background: linear-gradient(#f6f7fa, #e9ebf1 50%, #dcdfe8 52%, #f2f3f7);
}

.field {
    display: flex;
    align-items: center;
    height: 57px;
    border: 2px solid #7f9db9;
    background: #fff;
}

.address {
    flex: 1;
    padding: 0 3px 0 5px;
}

.favicon {
    flex: none;
    width: 41px;
    height: 42px;
    background: #2a5fa5;
    color: #fff;
    font: italic bold 28px/42px "Liberation Sans", sans-serif;
    text-align: center;
}

.url {
    flex: 1;
    padding-top: 3px;
    margin-left: 12px;
    color: #aaa899;
    white-space: nowrap;
    outline: 0;
}

.url b {
    color: #16191e;
    font-weight: normal;
}

.address-drop {
    width: 36px;
    height: 48px;
    border-radius: 5px;
    background: linear-gradient(135deg, #cfdff6, #aac6ec);
}

.address-drop svg, .sb-button svg {
    width: 22px;
    height: 18px;
}

.go {
    margin: 0 20px 0 11px;
}

.search {
    width: 638px;
    padding-left: 10px;
}

.yandex {
    width: 46px;
    color: #e0312c;
    font: bold 46px/50px Roboto, sans-serif;
}

.search input {
    flex: 1;
    min-width: 0;
    padding: 3px 0 0;
    border: 0;
    outline: 0;
    font: inherit;
}

.search input::placeholder {
    color: #aaa899;
    opacity: 1;
}

.search-buttons {
    display: flex;
    margin-left: 11px;
}

.search-buttons .tool {
    margin: 0;
    border-radius: 7px 0 0 7px;
}

.search-buttons .tool + .tool {
    width: 33px;
    border-left: 0;
    border-radius: 0 7px 7px 0;
}

/* Меню */

.menubar {
    display: flex;
    gap: 39px;
    height: 59px;
    padding: 5px 23px 0;
    border-top: 3px solid #fbfbf8;
    border-bottom: 2px solid #b3b1a2;
    background: linear-gradient(90deg, #f3f4f6, #ecebdf 70%, #eae8d6);
    flex: none;
}

.menubar button {
    height: 46px;
}

/* Вкладки */

.tabbar {
    display: flex;
    align-items: flex-end;
    height: 78px;
    background: linear-gradient(90deg, rgba(243, 244, 246, 1), rgba(236, 235, 223, 0) 60%), linear-gradient(#f0efe6, #e7e5cf);
    border-bottom: 2px solid #9a9ca4;
    flex: none;
}

.star {
    margin: 0 38px 15px 15px;
}

.quick-tabs {
    display: flex;
    height: 62px;
    border: 2px solid #a3a7b0;
    border-bottom: 0;
    border-radius: 8px 8px 0 0;
    background: linear-gradient(#f4f6f9, #dde3ec);
}

.quick-tabs button {
    width: 57px;
}

.quick-tabs button + button {
    width: 36px;
    border-left: 2px solid #a3a7b0;
}

.tab {
    display: flex;
    align-items: center;
    width: 447px;
    height: 63px;
    padding: 2px 10px 0 9px;
    border: 2px solid #a3a7b0;
    border-bottom: 0;
    border-radius: 9px 9px 0 0;
    background: linear-gradient(#f2f5f8 0, #e0e6ec 6px, #dfe6ee 60%, #e8ecf2);
    white-space: nowrap;
}

.tab span {
    flex: none;
}

.tab .icon + span {
    margin-left: 3px;
}

.tab .favicon + span {
    margin-left: 5px;
}

.tab.active {
    position: relative;
    height: 69px;
    padding: 0 17px 0 5px;
    margin-bottom: -2px;
    background: linear-gradient(#c2d6e8, #d6e0ea 50%, #f1f2f5);
}

.tab-close {
    margin-left: auto;
}

.tab-close svg {
    width: 24px;
    height: 22px;
}

.new-tab {
    width: 74px;
}

.commands {
    display: flex;
    align-items: center;
    height: 76px;
    margin-left: auto;
}

.cmd {
    justify-content: flex-start;
    width: 77px;
    gap: 6px;
}

.cmd.wide {
    width: 101px;
    gap: 21px;
}

.cmd.mail {
    width: 70px;
}

.cmd.plain {
    width: 60px;
}

.key {
    width: 40px;
    height: 42px;
    border: 5px solid #a9abb2;
    border-color: #e4e5e9 #9c9ea6 #84868e #d4d5da;
    background: #dedfe4;
    font: 24px/30px "Liberation Sans", sans-serif;
}

.more {
    width: 30px;
    padding-bottom: 36px;
    margin-left: 28px;
    font-size: 35px;
    font-weight: bold;
}

/* Область страницы */

.viewport {
    flex: 1;
    display: flex;
    min-height: 0;
    margin-top: 9px;
    border: 4px solid #7f7f73;
    border-color: #7f7f73 #e9e7d8 #a5a396 #8d8d84;
    background: #fff;
    box-shadow: 0 -9px 0 #f1f2f5;
}

.page {
    flex: 1;
    min-width: 0;
    padding: 26px 94px 0 91px;
    overflow: hidden;
}

.topic-nav {
    display: flex;
    justify-content: space-between;
    height: 76px;
    padding: 0 25px 0 10px;
    margin-bottom: 48px;
}

.pages {
    display: flex;
    align-items: flex-start;
    font-size: 39px;
    line-height: 52px;
    color: #3f4652;
}

.pages-label {
    margin-right: 21px;
}

.pages-jump {
    width: 52px;
    height: 20px;
    margin-right: 11px;
    border: 2px solid #d4d6da;
}

.pages-jump svg {
    width: 18px;
    height: 12px;
}

.page-link {
    width: 47px;
    height: 54px;
    margin-right: 11px;
    border: 2px solid #d4d6da;
    color: #7a3f78;
    font-size: 37px;
    line-height: 54px;
    text-align: center;
    text-decoration: none;
}

.page-link.prev {
    width: 59px;
}

.page-current {
    margin-left: 6px;
    color: #3f9068;
    font: bold 46px/52px "Liberation Serif", serif;
}

.topic-buttons {
    display: flex;
    gap: 25px;
}

.topic-button {
    display: flex;
    align-items: center;
    height: 76px;
    padding: 8px 30px 0 27px;
    border-radius: 8px;
    background: linear-gradient(#2d4864 50%, #263d5c 51%);
    color: #e8eef4;
    font-size: 37px;
    text-decoration: none;
}

.topic-button svg {
    width: 34px;
    height: 38px;
    margin-right: 24px;
}

.reply h2 {
    height: 92px;
    padding-left: 20px;
    background: linear-gradient(#304b66 0, #2d4864 50%, #263d5c 51%);
    color: #e6edf3;
    font: 42px/92px "Liberation Sans", sans-serif;
}

.reply-body {
    padding: 25px 20px 23px 21px;
    border: 2px solid #dde1e7;
    border-width: 0 2px;
    background: #edf0f3;
}

.editor {
    display: flex;
    gap: 9px;
    padding-right: 2px;
    border: 5px solid #d3d9df;
}

.editor-main {
    flex: 1;
    min-width: 0;
}

.toolbar {
    display: flex;
    align-items: center;
    height: 81px;
    padding-left: 3px;
    border: 2px solid #f3f6f8;
    border-width: 2px 0 0;
    box-shadow: inset 0 -2px 0 #d5dadf;
    background: #e3e7eb;
}

.toolbar.empty {
    height: 86px;
}

.tb {
    width: 75px;
    height: 79px;
    color: #3d444c;
    font: 38px/44px "Liberation Serif", serif;
}

.tb u {
    text-decoration-thickness: 3px;
    text-underline-offset: 4px;
}

.tb i {
    font-weight: bold;
}

.tb sub, .tb sup {
    color: #5f9ad6;
    font-size: 24px;
    line-height: 0;
}

.ico-a {
    fill: #8fbfe8;
    stroke: #6fa8dc;
    stroke-width: .6px;
    font: italic bold 11px "Liberation Serif", serif;
}

.ico-abc {
    fill: #3f8a50;
    font: bold 7px "Liberation Sans", sans-serif;
}

.ico-ya {
    fill: #dc3430;
    font: bold 28px Roboto, sans-serif;
}

.toolbar select {
    appearance: none;
    height: 58px;
    padding: 12px 19px 0;
    margin-right: 16px;
    border: 2px solid #b4c1cb;
    border-radius: 0;
    background: #fff;
    color: #3f4652;
    font: 31px/38px "DejaVu Sans Condensed", sans-serif;
}

.sel-special {
    width: 297px;
    margin-left: 6px;
}

.sel-font {
    width: 271px;
}

.toolbar .sel-size {
    width: 184px;
    margin-right: 8px;
}

.tb-group {
    display: flex;
    padding: 0 2px 0 10px;
    border-right: 2px solid #d3d9df;
}

.tb-group.first {
    padding-left: 0;
}

.tb-group.open, .tb-group.last {
    border-right: 0;
}

.tb-group.right {
    margin-left: auto;
}

.tb-group.last {
    padding-right: 0;
}

.tb-group.narrow .tb {
    width: 69px;
}

.editor-text {
    height: 646px;
    padding: 12px 8px 0 9px;
    border: 4px solid #7f7f73;
    border-color: #7f7f73 #eeece0 #eeece0 #8d8d84;
    background: #fff;
    color: #20202c;
    font: 31px/38px "Liberation Sans", sans-serif;
    outline: 0;
}

.quoted {
    display: inline-block;
    width: 631px;
    color: #f0a030;
}

.caret {
    height: 38px;
    margin-top: 38px;
    border-left: 3px solid #16191e;
}

.smileys {
    display: flex;
    flex-direction: column;
    width: 490px;
    border-right: 2px solid #d3d9df;
    background: #edf0f3;
}

.smileys-head {
    display: flex;
    align-items: center;
    justify-content: space-between;
    height: 65px;
    padding: 0 14px 0 16px;
    background: #e3e7eb;
}

.smileys-head h3 {
    padding-top: 12px;
    color: #2d4864;
    font: bold 24px/30px "Liberation Sans", sans-serif;
}

.smileys-head svg {
    width: 34px;
    height: 34px;
}

.smileys-grid {
    display: grid;
    grid-template-columns: 1fr 1fr;
    flex: 1;
    align-content: start;
}

.smileys-grid button {
    height: 78px;
    background: #fbfcfc;
}

.smileys-grid button:nth-child(4n), .smileys-grid button:nth-child(4n + 3) {
    background: #f1f2f4;
}

.smileys-grid svg {
    width: 45px;
    height: 47px;
}

.smileys-foot {
    display: flex;
    align-items: flex-end;
    height: 66px;
    margin-bottom: 2px;
    background: #e2e7eb;
}

.smileys-foot a {
    height: 54px;
    padding: 0 8px;
    background: #d3dae1;
    color: #2d4864;
    font: bold 27px/54px "Liberation Sans", sans-serif;
    text-decoration: none;
}

.submit-row {
    display: flex;
    align-items: center;
    justify-content: center;
    gap: 23px;
    height: 146px;
    margin: 0;
    border: 3px solid #cc5138;
    border-top-color: #54423f;
    border-left-color: #54423f;
    background: #d3dae1;
    box-shadow: 0 10px 0 #d3dae1;
}

.submit {
    height: 63px;
    padding: 0 19px;
    border: 2px solid #3c6080;
    border-right-color: #263d5c;
    background: #263d5c;
    color: #fff;
    font: bold 35px/44px "Liberation Sans", sans-serif;
}

.submit.extended {
    padding: 0 23px;
    border-color: #f8fafb #c3ccd5 #c3ccd5 #f8fafb;
    background: #edf0f3;
    color: #2d4864;
}

.stats {
    height: 200px;
    margin-top: 37px;
    padding: 46px 0 0 39px;
    border: 2px solid #dde1e7;
    background: #edf0f3;
    color: #5f7488;
    font-size: 35px;
    line-height: 44px;
}

.stats-count {
    color: #a0522d;
}

.stats-line {
    padding-left: 632px;
    margin-top: 3px;
}

.scrollbar {
    display: flex;
    flex-direction: column;
    align-items: center;
    width: 43px;
    padding: 1px 0 2px;
    background: linear-gradient(90deg, #f1f0ea, #fdfdfb);
    flex: none;
}

.sb-button {
    width: 37px;
    height: 42px;
    border: 2px solid #fff;
    border-radius: 6px;
    background: linear-gradient(135deg, #cfdff6, #a9c4ea);
    box-shadow: 0 0 0 1px #a8bcdc;
}

.sb-thumb {
    display: flex;
    align-items: center;
    justify-content: center;
    width: 37px;
    height: 75px;
    margin: auto 0 48px;
    border: 2px solid #fff;
    border-radius: 6px;
    background: linear-gradient(90deg, #c8daf6, #b1c8ec);
    box-shadow: 0 1px 0 1px #8fa8d0;
}

.sb-thumb svg {
    width: 18px;
    height: 22px;
}

/* Строка состояния */

.statusbar {
    display: flex;
    align-items: center;
    height: 59px;
    padding: 5px 0 0 3px;
    background: linear-gradient(#d8d6c4 0, #ece9d8 8px, #ebe9d8 45px, #d9d6ba);
    flex: none;
}

.status-text {
    flex: 1;
}

.cell {
    display: flex;
    align-items: center;
    justify-content: flex-start;
    width: 60px;
    height: 46px;
    padding-left: 10px;
    border-left: 2px solid #c0bdaa;
    box-shadow: inset 2px 0 0 #fff;
}

.cell.zone {
    width: 525px;
    gap: 9px;
}

.cell.lock {
    width: 107px;
    padding-left: 22px;
    gap: 18px;
}

.cell.zoom {
    width: 220px;
    padding-left: 24px;
    gap: 2px;
}

.zoom .arrow {
    margin-left: 38px;
}

.grip {
    align-self: flex-end;
    width: 28px;
    height: 30px;
    margin: 0 3px 3px 0;
}

/* Панель задач */

.taskbar {
    display: flex;
    align-items: center;
    height: 78px;
    background: linear-gradient(#3f6fb0 0, #5090d0 6px, #3f6db4 12px, #3f63a8 50%, #4068ac 90%, #2f4f94);
    color: #f2f6fc;
    flex: none;
}

.start {
    justify-content: flex-start;
    width: 310px;
    height: 78px;
    padding-left: 26px;
    gap: 13px;
    border-radius: 0 16px 16px 0;
    background: linear-gradient(#2f7a34, #5bb458 12px, #3f9a42 30px, #45a046 80%, #2c7a30);
    font: italic bold 40px/50px "DejaVu Sans Condensed", sans-serif;
    text-shadow: 2px 2px 2px #1f4a20;
}

.start svg {
    width: 47px;
    height: 47px;
}

.tasks {
    display: flex;
    flex: 1;
    justify-content: flex-end;
    gap: 4px;
}

.task {
    justify-content: flex-start;
    width: 396px;
    height: 61px;
    padding-left: 23px;
    gap: 8px;
    border-radius: 5px;
    background: linear-gradient(#6a9cd8 0, #4f84c4 10px, #4c7fbc 80%, #3f6cb0);
    white-space: nowrap;
}

.tab, .task.current {
    font-size: 28px;
}

.task.current {
    background: #34559c;
}

.lang {
    width: 92px;
    padding-left: 24px;
}

.tray {
    display: flex;
    align-items: center;
    gap: 4px;
    height: 78px;
    width: 297px;
    background: linear-gradient(90deg, transparent 21px, #1c5fa8 21px, transparent 24px), linear-gradient(90deg, transparent 21px, #2f93d2 21px);
}

.tray-toggle svg {
    width: 42px;
    height: 47px;
    margin-right: 3px;
}

.clock {
    margin-left: 12px;
}

/* Контекстное меню поверх страницы */

.context-menu {
    position: absolute;
    z-index: 10;
    left: 140px;
    top: 756px;
    width: 628px;
    margin: 0;
    padding: 8px 5px 4px;
    border: 2px solid #aca899;
    background: #fff;
    list-style: none;
}

.context-menu button {
    position: relative;
    justify-content: flex-start;
    width: 100%;
    height: 49px;
    padding-left: 59px;
    white-space: nowrap;
}

.context-menu button:disabled {
    color: #aca899;
}

.context-menu .selected {
    background: #426fae;
    color: #f2f6fc;
}

.sep {
    height: 24px;
    padding: 8px 3px 0;
}

.sep::before {
    content: "";
    display: block;
    height: 2px;
    background: #aca899;
}

.item-icon {
    position: absolute;
    left: 4px;
    width: 40px;
    height: 40px;
}

.item-icon.tall {
    left: 14px;
    width: 28px;
    height: 44px;
}

.submenu {
    width: 10px;
    height: 20px;
    margin: 0 15px 4px auto;
}
```
